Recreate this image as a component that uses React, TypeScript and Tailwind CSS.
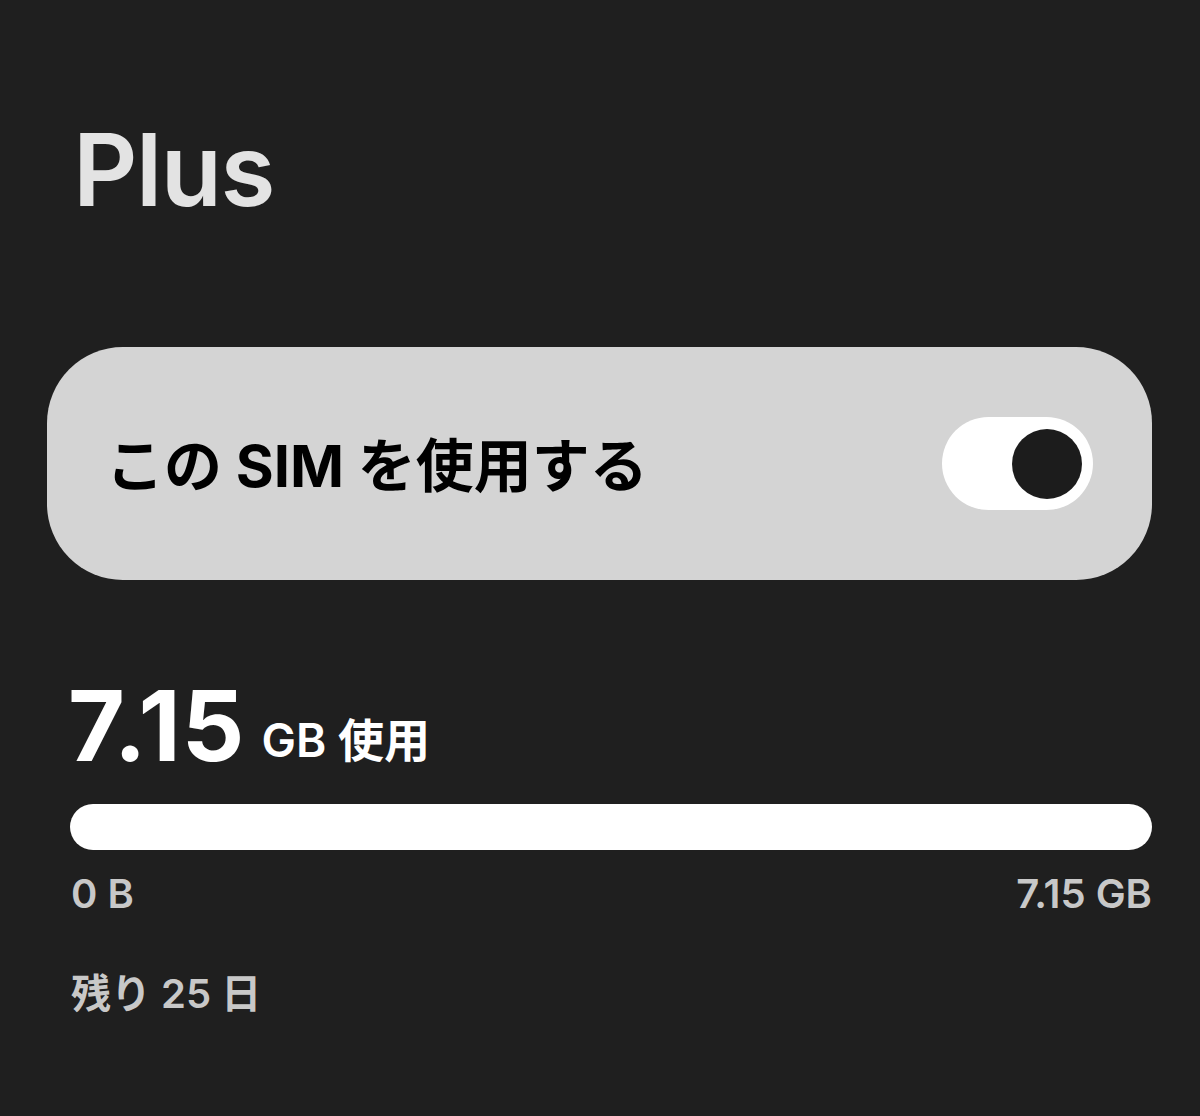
export default function App() {
  const font = { fontFamily: 'Inter, "Noto Sans CJK JP", sans-serif' };
  return (
    <div className="w-[1200px] h-[1116px] bg-[#1f1f1f] overflow-hidden" style={font}>
      <div className="pl-[73px] pt-[120px] h-[347px] text-[100px] leading-none font-semibold text-[#e3e3e3] tracking-[-1.5px]">
        Plus
      </div>
      <div className="ml-[47px] w-[1105px] h-[233px] rounded-[76px] bg-[#d4d4d4] flex items-center justify-between pl-[59px] pr-[59px]">
        <span className="text-[58px] font-bold text-black leading-none pt-[4px]">この SIM を使用する</span>
        <div className="w-[151px] h-[93px] rounded-full bg-white flex items-center justify-end pr-[11px]">
          <div className="w-[70px] h-[70px] rounded-full bg-[#1c1c1c]" />
        </div>
      </div>
      <div className="mt-[97px] ml-[68px] flex items-baseline text-white">
        <span className="text-[98px] font-bold leading-none tracking-[1px]">7.15</span>
        <span className="ml-[16px] text-[46px] font-semibold leading-none -translate-y-[4px]">GB 使用</span>
      </div>
      <div className="mt-[29px] ml-[70px] w-[1082px] h-[46px] rounded-full bg-white" />
      <div className="mt-[24px] ml-[71px] w-[1081px] flex justify-between text-[40px] font-semibold text-[#c8c8c8] leading-none">
        <span>0 B</span>
        <span>7.15 GB</span>
      </div>
      <div className="mt-[60px] ml-[71px] text-[40px] font-semibold text-[#c8c8c8] leading-none">残り 25 日</div>
    </div>
  );
}
